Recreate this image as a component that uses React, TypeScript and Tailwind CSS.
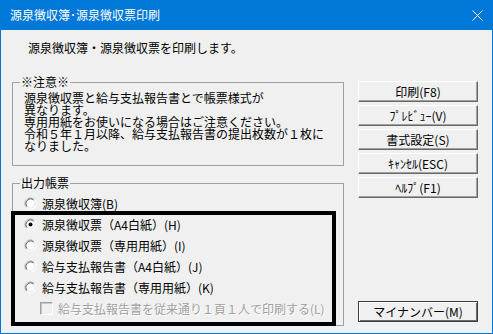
import React from "react";

const font = "font-['Noto_Sans_CJK_JP','Noto_Sans',sans-serif]";

function Radio({ checked }: { checked?: boolean }) {
  return (
    <svg width="13" height="13" viewBox="0 0 13 13" className="shrink-0">
      <circle cx="6.5" cy="6.5" r="5.5" fill="#ffffff" />
      <path d="M2.61 10.39 A5.5 5.5 0 0 1 10.39 2.61" fill="none" stroke="#a0a0a0" strokeWidth="1" />
      <path d="M10.39 2.61 A5.5 5.5 0 0 1 2.61 10.39" fill="none" stroke="#ffffff" strokeWidth="1" />
      <path d="M3.32 9.68 A4.5 4.5 0 0 1 9.68 3.32" fill="none" stroke="#696969" strokeWidth="1" />
      <path d="M9.68 3.32 A4.5 4.5 0 0 1 3.32 9.68" fill="none" stroke="#e3e3e3" strokeWidth="1" />
      {checked && <circle cx="6.5" cy="6.5" r="2" fill="#000000" />}
    </svg>
  );
}

function Btn({ children, def }: { children: React.ReactNode; def?: boolean }) {
  return (
    <div
      className={
        def
          ? "h-[21px] w-[120px] flex items-center justify-center border border-[#3c3c3c] bg-[#f0f0f0] shadow-[inset_1px_1px_0_#ffffff,inset_-1px_-1px_0_#696969] text-[12px] leading-[12px] text-black"
          : "h-[21px] w-[120px] flex items-center justify-center border border-t-white border-l-white border-r-[#696969] border-b-[#696969] bg-[#f0f0f0] shadow-[inset_-1px_-1px_0_#a0a0a0] text-[12px] leading-[12px] text-black"
      }
    >
      {children}
    </div>
  );
}

export default function App() {
  const rows = [
    { label: "源泉徴収簿(B)", checked: false },
    { label: "源泉徴収票（A4白紙）(H)", checked: true },
    { label: "源泉徴収票（専用用紙）(I)", checked: false },
    { label: "給与支払報告書（A4白紙）(J)", checked: false },
    { label: "給与支払報告書（専用用紙）(K)", checked: false },
  ];
  return (
    <div className={`relative w-[493px] h-[334px] bg-[#f0f0f0] flex flex-col border-x border-b border-[#0078d7] overflow-hidden ${font}`}>
      {/* title bar */}
      <div className="h-[30px] shrink-0 bg-[#0078d7] flex items-center pl-[9px] pr-[10px] -mx-px">
        <span className="text-white text-[12px] leading-[12px] pl-px">源泉徴収簿･源泉徴収票印刷</span>
        <div className="ml-auto flex items-center">
          <svg width="11" height="11" viewBox="0 0 11 11">
            <path d="M0.5 0.5 L10.5 10.5 M10.5 0.5 L0.5 10.5" stroke="#ffffff" strokeWidth="1" />
          </svg>
        </div>
      </div>

      {/* body */}
      <div className="flex flex-col pl-[11px] pt-[10px] text-black">
        <div className="pl-[16px] text-[12px] leading-[16px]">源泉徴収簿・源泉徴収票を印刷します。</div>

        <div className="flex gap-[14px] mt-[20px]">
          {/* left column */}
          <div className="w-[332px] flex flex-col">
            <fieldset className="border border-[#a0a0a0] px-[11px] pt-[4px] pb-[13px]">
              <legend className="ml-[-4px] px-px text-[12px] leading-[12px]">※注意※</legend>
              <div className="text-[12px] leading-[12px] whitespace-nowrap">
                <div>源泉徴収票と給与支払報告書とで帳票様式が</div>
                <div>異なります。</div>
                <div>専用用紙をお使いになる場合はご注意ください。</div>
                <div>令和５年１月以降、給与支払報告書の提出枚数が１枚に</div>
                <div>なりました。</div>
              </div>
            </fieldset>

            <fieldset className="mt-[11px] border border-[#a0a0a0] px-[11px] pt-[4px] pb-[6px]">
              <legend className="ml-[-4px] px-px text-[12px] leading-[12px]">出力帳票</legend>
              <div className="flex flex-col text-[12px] leading-[12px] whitespace-nowrap">
                {rows.map((r) => (
                  <div key={r.label} className="h-[21px] flex items-center gap-[5px]">
                    <Radio checked={r.checked} />
                    <span>{r.label}</span>
                  </div>
                ))}
                <div className="h-[21px] flex items-center gap-[5px] pl-[16px]">
                  <div className="w-[13px] h-[13px] shrink-0 border border-t-[#a0a0a0] border-l-[#a0a0a0] border-r-white border-b-white bg-[#f0f0f0] shadow-[inset_1px_1px_0_#c8c8c8]" />
                  <span className="text-[#a0a0a0] [text-shadow:1px_1px_0_#ffffff]">給与支払報告書を従来通り１頁１人で印刷する(L)</span>
                </div>
              </div>
            </fieldset>
          </div>

          {/* right column */}
          <div className="flex flex-col gap-[3px] pt-[5px] pb-[4px]">
            <Btn>印刷(F8)</Btn>
            <Btn>ﾌﾟﾚﾋﾞｭｰ(V)</Btn>
            <Btn>書式設定(S)</Btn>
            <Btn>ｷｬﾝｾﾙ(ESC)</Btn>
            <Btn>ﾍﾙﾌﾟ(F1)</Btn>
            <div className="mt-auto">
              <Btn def>マイナンバー(M)</Btn>
            </div>
          </div>
        </div>
      </div>

      {/* highlight overlay */}
      <div className="absolute left-[10px] top-[211px] w-[325px] h-[115px] border-4 border-black pointer-events-none" />
    </div>
  );
}
